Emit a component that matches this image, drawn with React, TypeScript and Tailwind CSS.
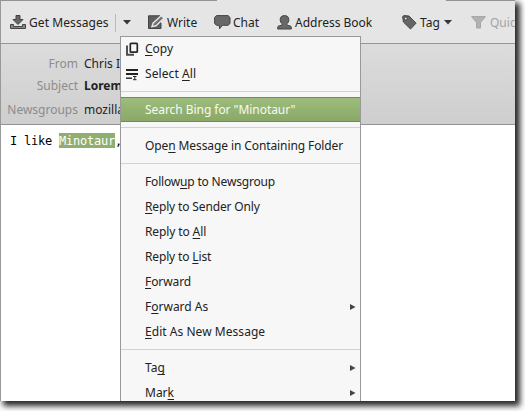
import React from "react";

const sans = "font-['Noto_Sans','Open_Sans',sans-serif]";

function U({ children }: { children: React.ReactNode }) {
  return (
    <span className="underline decoration-1 underline-offset-2 [text-decoration-skip-ink:none]">
      {children}
    </span>
  );
}

function Label({ text, accel, className }: { text: string; accel?: number; className?: string }) {
  if (accel === undefined) return <span className={className}>{text}</span>;
  return (
    <span className={className}>
      {text.slice(0, accel)}
      <U>{text[accel]}</U>
      {text.slice(accel + 1)}
    </span>
  );
}

function Item({ text, accel, icon, sub, active, tracking }: {
  text: string;
  accel?: number;
  icon?: React.ReactNode;
  sub?: boolean;
  active?: boolean;
  tracking?: string;
}) {
  return (
    <div
      className={`flex h-[25px] shrink-0 items-center ${
        active
          ? "-mx-px border border-[#6f8f50] bg-linear-to-b from-[#9dbd7d] to-[#8aa868] text-[#f7faf3]"
          : "text-[#222]"
      }`}
    >
      <span className="flex w-6 shrink-0 items-center pl-[5px]">{icon}</span>
      <Label text={text} accel={accel} className={tracking} />
      {sub && (
        <svg className="mr-[4px] ml-auto" width="6" height="6" viewBox="0 0 6 6">
          <path d="M0 0 L5.5 3 L0 6Z" fill="#444" />
        </svg>
      )}
    </div>
  );
}

function Separator() {
  return (
    <div className="flex h-[11px] shrink-0 flex-col pt-[5px]">
      <div className="h-px bg-[#d2d2d2]" />
    </div>
  );
}

const CopyIcon = (
  <svg width="13" height="14" viewBox="0 0 13 14" fill="none">
    <path d="M1 3.5V12.8H8" stroke="#4a4a4a" strokeWidth="1.9" />
    <rect x="4.3" y="1.4" width="7" height="8.8" rx="0.8" stroke="#262626" strokeWidth="1.7" />
  </svg>
);

const SelectIcon = (
  <svg width="13" height="14" viewBox="0 0 13 14" fill="none" stroke="#222">
    <path d="M0 3H12M0 7H12" strokeWidth="1.8" />
    <path d="M0 11.2H6" strokeWidth="1.4" />
    <path d="M7 9.5H10.5M7 12.7H10.5M8.8 9.5V12.5" strokeWidth="1" />
  </svg>
);

function Caret() {
  return (
    <svg width="8" height="5" viewBox="0 0 8 5" className="shrink-0">
      <path d="M0 0H8L4 4.6Z" fill="#2c3a40" />
    </svg>
  );
}

function Toolbar() {
  return (
    <div className="relative flex h-[44px] items-center border-b border-[#979797] bg-[#e5e5e5] pt-[2px] pl-[9px] text-[#222]">
      <div className="absolute top-0 -left-px h-px w-[217px] bg-[#929292]" />
      <div className="absolute top-0 left-[445px] h-px w-[70px] bg-[#929292]" />
      <div className="flex w-[105px] shrink-0 items-center">
        <svg width="16" height="15" viewBox="0 0 16 15" className="mr-[3px] shrink-0">
          <path d="M6 .5H10V4.5H13L8 9.5L3 4.5H6Z" fill="#666" stroke="#444" />
          <path d="M.5 9.5H3.5V11.5H12.5V9.5H15.5V13.5H.5Z" fill="#888" stroke="#444" />
        </svg>
        <span className="tracking-[0.08px]">Get Messages</span>
      </div>
      <div className="h-[18px] w-px shrink-0 bg-[#bbb]" />
      <div className="ml-[7px] flex w-[25px] shrink-0">
        <Caret />
      </div>
      <div className="flex w-[66px] shrink-0 items-center">
        <svg width="17" height="15" viewBox="0 0 17 15" className="mr-[2px] shrink-0">
          <path d="M.5 .8H12V3L9 6L13 8V13.5H.5Z" fill="#5e5e5e" stroke="#444" />
          <path d="M4 11.5L5 8.2L13 .8L16 3L8 10.8Z" fill="#666" stroke="#e5e5e5" strokeWidth="1.4" />
          <path d="M5.5 10L13.2 2.3" stroke="#aaa" strokeWidth=".6" />
        </svg>
        <span>Write</span>
      </div>
      <div className="flex w-[63px] shrink-0 items-center">
        <svg width="17" height="15" viewBox="0 0 17 15" className="mr-[2px] shrink-0">
          <path d="M2.5 .6H14L16 2.5V8.5L14 10.3H8.5L5.5 13.8L5.2 10.3H2.5L.6 8.5V2.5Z" fill="#686868" stroke="#444" />
        </svg>
        <span>Chat</span>
      </div>
      <div className="flex w-[125px] shrink-0 items-center">
        <svg width="15" height="15" viewBox="0 0 15 15" className="mr-[3px] shrink-0">
          <path d="M7.5 .6C4.6.6 3.2 2.2 3.2 4.7C3.2 6.7 4.1 8 5.2 8.8V10L1 11.3L.6 14H14.4L14 11.3L9.8 10V8.8C10.9 8 11.8 6.7 11.8 4.7C11.8 2.2 10.4.6 7.5.6Z" fill="#686868" stroke="#444" />
        </svg>
        <span>Address Book</span>
      </div>
      <div className="flex w-[69px] shrink-0 items-center">
        <svg width="15" height="15" viewBox="0 0 15 15" className="mr-[3px] shrink-0">
          <path fillRule="evenodd" d="M.6 1.6L2 .6L7 1L14 8.2L8.5 14L1.4 7ZM2.3 3.5A1.5 1.5 0 1 0 5.3 3.5A1.5 1.5 0 1 0 2.3 3.5Z" fill="#666" stroke="#444" />
        </svg>
        <span className="mr-1">Tag</span>
        <Caret />
      </div>
      <div className="flex shrink-0 items-center text-[#a3a3a3]">
        <svg width="15" height="13" viewBox="0 0 15 13" className="mr-[4px] shrink-0">
          <path d="M.6 .6H14.4L9.5 6.5V12H5.5V6.5Z" fill="#b2b2b2" stroke="#a5a5a5" />
        </svg>
        <span>Quick</span>
      </div>
    </div>
  );
}

function Field({ name, value, className }: { name: string; value: string; className: string }) {
  return (
    <div className={`flex items-center ${className}`}>
      <span className="w-[77px] shrink-0 text-right font-normal text-[#8c8c8c]">{name}</span>
      <span className="ml-[6px] text-[#222]">{value}</span>
    </div>
  );
}

export default function App() {
  return (
    <div className={`relative h-[411px] w-[525px] overflow-hidden bg-white text-[12px] leading-[16px] whitespace-nowrap ${sans}`}>
      <div className="h-[401px] w-[515px] shadow-[4px_4px_6px_1px_rgba(0,0,0,0.85)]">
        <div className="relative h-full overflow-hidden border-l border-[#999] bg-white">
          <Toolbar />
          <div className="h-[81px] border-b border-[#929292] bg-linear-to-b from-[#dcdcdc] to-[#cecece] pt-[8px]">
            <Field name="From" value="Chris I" className="h-[23px]" />
            <Field name="Subject" value="Lorem" className="h-[21px] font-bold" />
            <Field name="Newsgroups" value="mozilla" className="h-[27px]" />
          </div>
          <div className="flex items-start pt-[8px] pl-[9px] font-['DejaVu_Sans_Mono',monospace] text-[12px] leading-[14px] tracking-[-0.224px] whitespace-pre text-black">
            <span className="pt-px">I like </span>
            <span className="bg-[#8fae70] pt-px text-white">Minotaur</span>
            <span className="pt-px">,</span>
          </div>
        </div>
      </div>
      <div className="absolute top-[36px] left-[120px] flex h-[365px] w-[241px] flex-col overflow-hidden border-x border-[#999] bg-[#f7f7f7]">
        <div className="absolute top-0 right-0 left-0 h-px bg-[#999]" />
        <Item text="Copy" accel={0} icon={CopyIcon} />
        <Item text="Select All" accel={7} icon={SelectIcon} tracking="tracking-[0.08px]" />
        <Separator />
        <Item text={'Search Bing for "Minotaur"'} active tracking="tracking-[-0.05px]" />
        <Separator />
        <Item text="Open Message in Containing Folder" accel={3} tracking="tracking-[-0.1px]" />
        <Separator />
        <Item text="Followup to Newsgroup" accel={6} tracking="tracking-[-0.18px]" />
        <Item text="Reply to Sender Only" accel={0} tracking="tracking-[-0.15px]" />
        <Item text="Reply to All" accel={9} tracking="tracking-[-0.12px]" />
        <Item text="Reply to List" accel={9} tracking="tracking-[-0.15px]" />
        <Item text="Forward" accel={0} tracking="tracking-[-0.08px]" />
        <Item text="Forward As" accel={1} sub />
        <Item text="Edit As New Message" accel={0} tracking="tracking-[0.04px]" />
        <Separator />
        <Item text="Tag" accel={2} sub />
        <Item text="Mark" accel={3} sub />
      </div>
    </div>
  );
}
